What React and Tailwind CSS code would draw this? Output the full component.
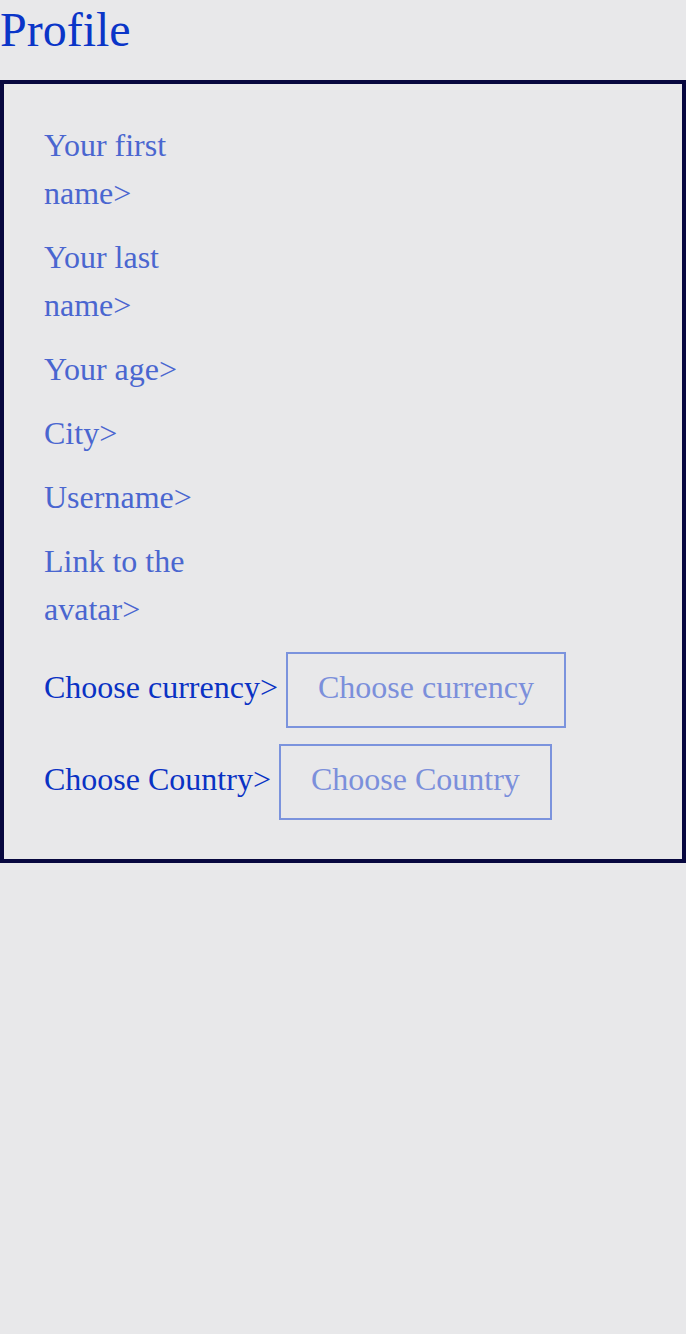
const fields = [
  "Your first name>",
  "Your last name>",
  "Your age>",
  "City>",
  "Username>",
  "Link to the avatar>",
];

const selects = [
  { label: "Choose currency>", placeholder: "Choose currency" },
  { label: "Choose Country>", placeholder: "Choose Country" },
];

const App = () => {
  return (
    <div className="min-h-screen bg-[#e8e8ea] font-['Liberation_Serif',serif]">
      <h1 className="text-[48px] leading-[55px] text-[#0a35c8] pt-[2px] mb-[23px]">Profile</h1>
      <div className="border-4 border-[#07073f] pl-[40px] pr-[40px] pt-[37px] pb-[39px]">
        <div className="flex flex-col gap-4">
          {fields.map((f) => (
            <div key={f} className="w-[180px] text-[32px] leading-[48px] text-[#4a66d0]">
              {f}
            </div>
          ))}
        </div>
        <div className="flex flex-col gap-4 mt-[19px]">
          {selects.map((s) => (
            <div key={s.label} className="flex items-baseline gap-2 text-[32px] leading-[48px]">
              <span className="text-[#0a32c4]">{s.label}</span>
              <button className="border-2 border-[#7b93dd] px-[30px] pt-[9px] pb-[15px] text-[#7b8fdb] font-['Liberation_Serif',serif] leading-[48px]">
                {s.placeholder}
              </button>
            </div>
          ))}
        </div>
      </div>
    </div>
  );
};

export default App;
